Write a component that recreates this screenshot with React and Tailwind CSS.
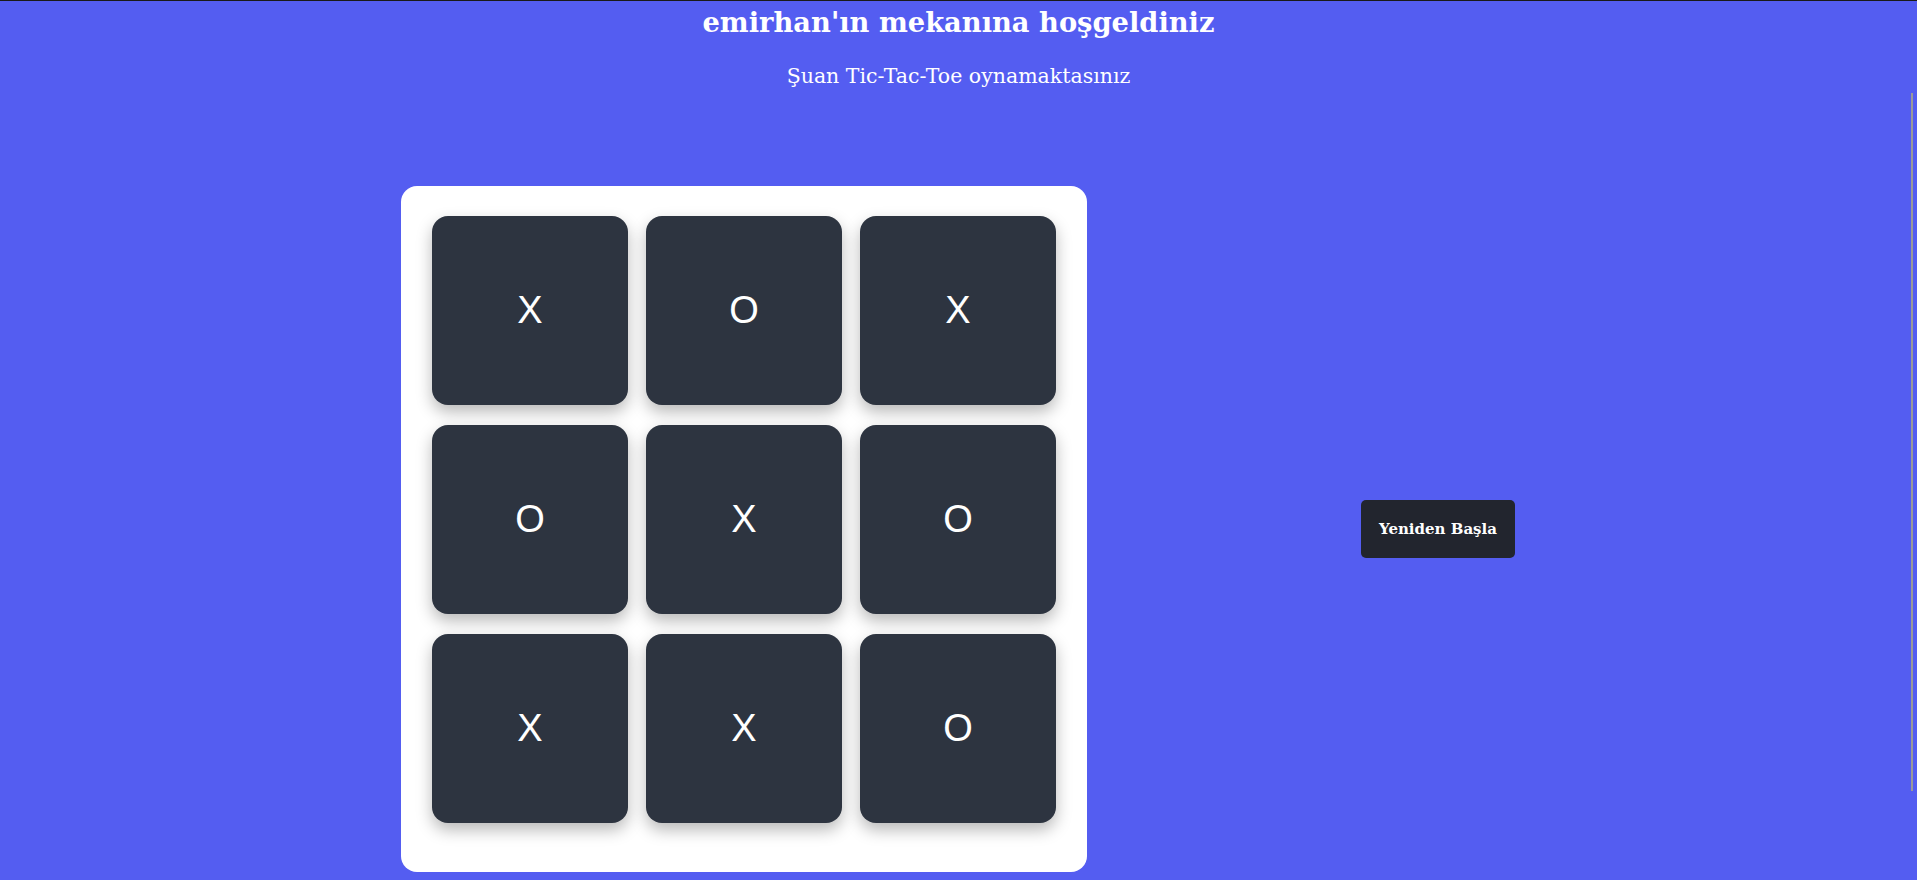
import React from 'react'

const board = ['X', 'O', 'X', 'O', 'X', 'O', 'X', 'X', 'O']

const Cell = ({ value }) => (
  <div className="flex h-[189px] items-center justify-center rounded-2xl bg-[#2d3440] text-[38px] text-white shadow-[0_7px_16px_rgba(0,0,0,0.28)] font-['Liberation_Sans',Arial,sans-serif]">
    {value}
  </div>
)

export default function App() {
  return (
    <div className="relative min-h-[880px] overflow-hidden bg-[#545df1] font-['DejaVu_Serif',serif] text-white">
      <div className="h-px bg-[#1a1a1a]" />

      <header className="text-center">
        <h1 className="pt-[2px] text-[27.3px] font-bold leading-[38px]">emirhan'ın mekanına hoşgeldiniz</h1>
        <p className="mt-[23px] text-[20.5px] leading-[24px]">Şuan Tic-Tac-Toe oynamaktasınız</p>
      </header>

      <main className="mt-[98px] flex items-center">
        <div className="ml-[401px] w-[686px] rounded-2xl bg-white px-[31px] pb-[49px] pt-[30px]">
          <div className="grid grid-cols-3 gap-x-[18px] gap-y-[20px]">
            {board.map((value, index) => (
              <Cell key={index} value={value} />
            ))}
          </div>
        </div>

        <button
          type="button"
          className="ml-[274px] h-[58px] w-[154px] rounded-[5px] bg-[#22252e] text-[15px] font-bold text-white"
        >
          Yeniden Başla
        </button>
      </main>

      {/* overlay scrollbar thumb */}
      <div className="absolute right-[4px] top-[93px] h-[698px] w-[2px] bg-[#9a9a9a]" />
    </div>
  )
}
